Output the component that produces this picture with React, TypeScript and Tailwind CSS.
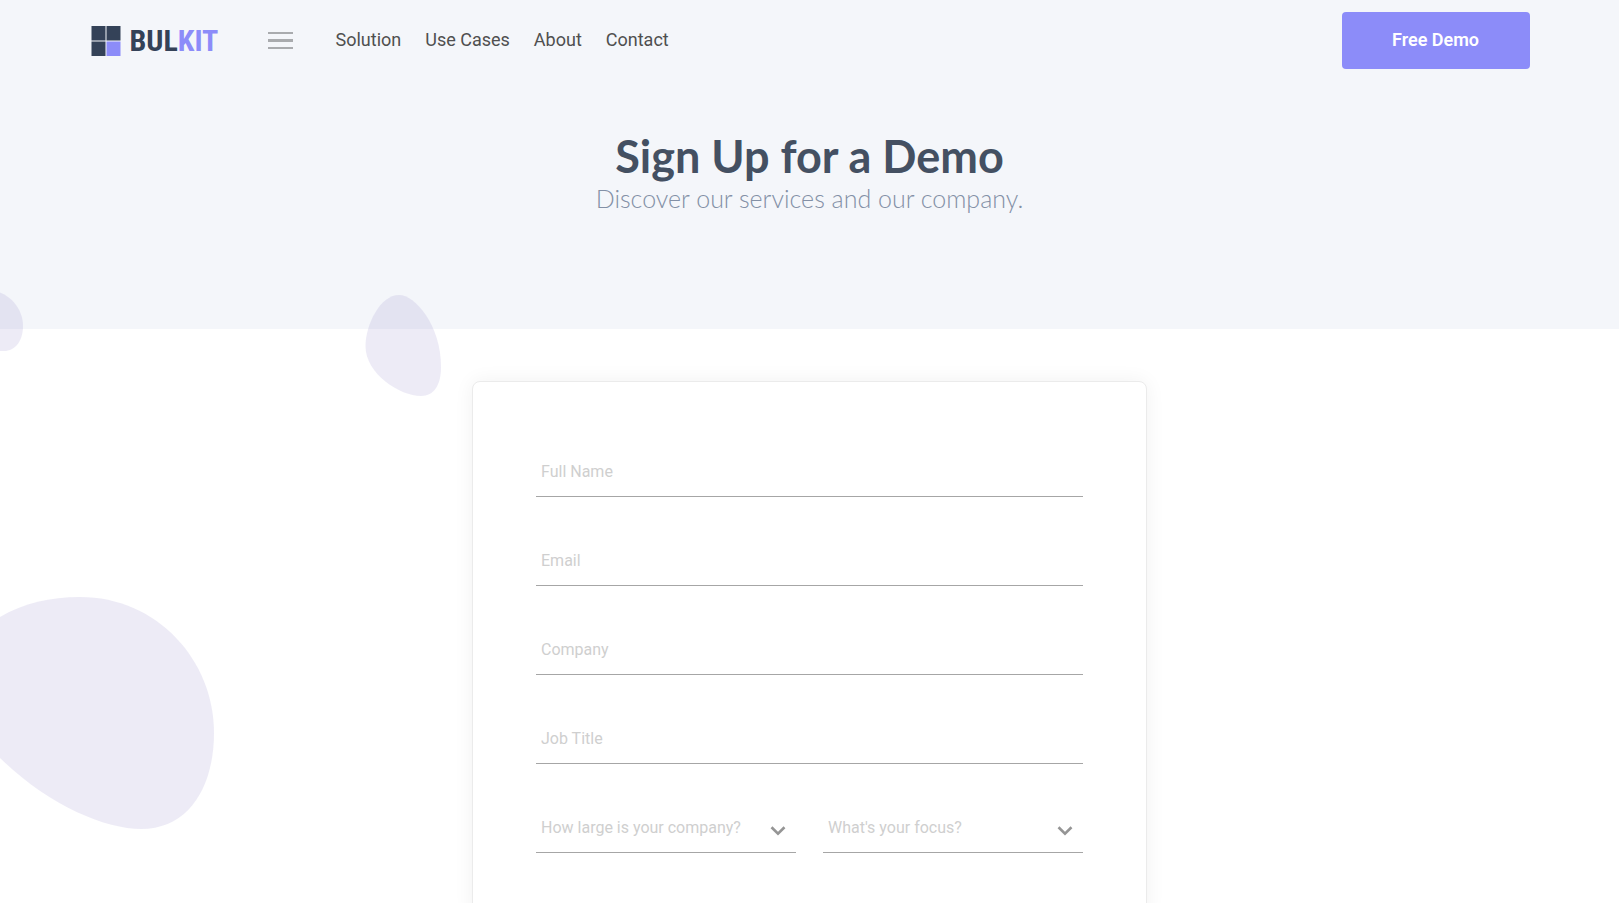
const navLinks = ["Solution", "Use Cases", "About", "Contact"];

const textFields = [
  { id: "name", label: "Full Name", type: "text" },
  { id: "email", label: "Email", type: "email" },
  { id: "company", label: "Company", type: "text" },
  { id: "title", label: "Job Title", type: "text" },
];

const selectFields = [
  { id: "size", label: "How large is your company?", options: ["1-10", "11-50", "51-200", "200+"] },
  { id: "focus", label: "What's your focus?", options: ["Sales", "Marketing", "Product"] },
];

function Logo() {
  return (
    <a href="#" aria-label="Bulkit" className="flex items-center gap-2">
      <svg className="h-8 w-8" viewBox="-1 0 32 32" aria-hidden="true">
        <path fill="#344258" d="M.5 1h14v14.5H.5zM15.5 1h14v14.5h-14zM.5 16.5h14V31H.5z" />
        <path fill="#8c8cf9" d="M15.5 16.5h14V31h-14z" />
      </svg>
      <span className="flex w-[90px] font-['Liberation_Sans_Narrow','Roboto_Condensed','Liberation_Sans',sans-serif] text-[30px] leading-8 font-bold text-[#344258]">
        BUL<span className="text-[#8c8cf9]">KIT</span>
      </span>
    </a>
  );
}

function Blobs() {
  return (
    <svg
      className="pointer-events-none absolute top-0 left-0 h-[903px] w-[460px]"
      viewBox="0 0 460 903"
      fill="#877ac3"
      fillOpacity="0.15"
      aria-hidden="true"
    >
      <path d="M0 292.5C12 297 23 310 23 326C23 341 15 351 4 351L0 351Z" />
      <path d="M399 295C415 295 441 325 441 367C441 385 434 396 421 396C400 396 365.5 374 365.5 346C365.5 325 380 295 399 295Z" />
      <path d="M0 617C24 603 50 597 80 597C157 597 214 660 214 733C214 785 190 829 141 829C105 829 48 805 0 758Z" />
    </svg>
  );
}

export default function App() {
  return (
    <div className="relative min-h-screen overflow-hidden bg-white font-['Roboto',sans-serif]">
      <header className="bg-[#f4f6fa] pb-[113px]">
        <div className="mx-auto flex h-[81px] max-w-[1440px] items-center">
          <Logo />
          <button type="button" aria-label="Open menu" className="ml-12 w-[28px]">
            <svg className="h-[17px] w-[25px]" viewBox="0 0 25 17" fill="#a9abae" aria-hidden="true">
              <path d="M0 0h25v2H0zM0 7h25v3H0zM0 15h25v2H0z" />
            </svg>
          </button>
          <nav className="ml-10 flex gap-6 pb-0.5">
            {navLinks.map((link) => (
              <a key={link} href="#" className="text-lg leading-6 text-[#4f4f4f]">
                {link}
              </a>
            ))}
          </nav>
          <button
            type="button"
            className="ml-auto h-[57px] w-[188px] rounded bg-[#8c8cf9] pb-0.5 text-lg font-semibold text-white"
          >
            Free Demo
          </button>
        </div>
        <div className="pt-[50px] text-center">
          <h1 className="font-['Lato',sans-serif] text-[45px] leading-[50px] font-bold text-[#445062]">
            Sign Up for a Demo
          </h1>
          <p className="font-['Lato',sans-serif] text-[25px] leading-[35px] font-light text-[#8390a6]">
            Discover our services and our company.
          </p>
        </div>
      </header>

      <Blobs />

      <main className="relative pt-[52px]">
        <form className="mx-auto flex max-w-[675px] flex-col gap-[39px] rounded-lg border border-[#ebebeb] bg-white px-[63px] py-[65px] shadow-[0_0_20px_rgba(0,0,0,0.06)]">
          {textFields.map((field) => (
            <input
              key={field.id}
              id={field.id}
              type={field.type}
              aria-label={field.label}
              placeholder={field.label}
              className="h-[50px] border-b border-[#a6a6a6] px-[5px] text-base text-[#4f4f4f] outline-none placeholder:text-[#cfcfcf]"
            />
          ))}
          <div className="grid grid-cols-2 gap-[27px]">
            {selectFields.map((field) => (
              <div key={field.id} className="relative">
                <select
                  id={field.id}
                  aria-label={field.label}
                  defaultValue=""
                  className="h-[50px] w-full appearance-none border-b border-[#a6a6a6] px-[5px] text-base text-[#cfcfcf] outline-none"
                >
                  <option value="" disabled>
                    {field.label}
                  </option>
                  {field.options.map((option) => (
                    <option key={option}>{option}</option>
                  ))}
                </select>
                <svg
                  className="pointer-events-none absolute right-[10px] bottom-[17px] h-[10px] w-4"
                  viewBox="0 0 16 10"
                  fill="none"
                  stroke="#959595"
                  strokeWidth="2.6"
                  aria-hidden="true"
                >
                  <path d="M1.5 1.3L8 7.7L14.5 1.3" />
                </svg>
              </div>
            ))}
          </div>
        </form>
      </main>
    </div>
  );
}
